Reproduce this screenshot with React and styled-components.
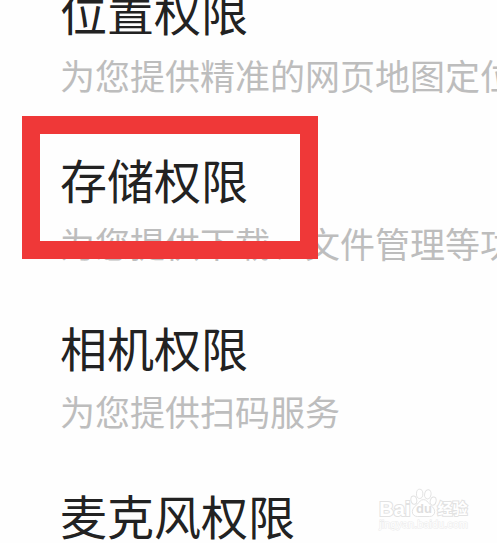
import React from "react";
import styled, { createGlobalStyle } from "styled-components";

const permissions = [
  { id: "location", title: "位置权限", text: "为您提供精准的网页地图定位服务" },
  {
    id: "storage",
    title: "存储权限",
    text: "为您提供下载、文件管理等功能",
    marked: true,
  },
  { id: "camera", title: "相机权限", text: "为您提供扫码服务" },
  { id: "microphone", title: "麦克风权限" },
];

export default function App() {
  return (
    <Page>
      <GlobalStyle />
      <List>
        {permissions.map((item) => (
          <Row key={item.id}>
            <Title>{item.title}</Title>
            {item.text && <Description>{item.text}</Description>}
            {item.marked && <Marker />}
          </Row>
        ))}
      </List>
      <Watermark>
        <Brand>
          <BrandText>Bai</BrandText>
          <Paw />
          <BrandText $small>经验</BrandText>
        </Brand>
        <Site>jingyan.baidu.com</Site>
      </Watermark>
    </Page>
  );
}

function Paw() {
  return (
    <PawBox>
      <svg width="27" height="30" viewBox="0 0 28 30" aria-hidden="true">
        <g fill="#fff" stroke="#e2e2e2" strokeWidth="1">
          <ellipse cx="4" cy="12" rx="3" ry="4.3" transform="rotate(-12 4 12)" />
          <ellipse cx="10" cy="5.5" rx="3.3" ry="4.8" />
          <ellipse cx="18.5" cy="6" rx="3.3" ry="4.8" transform="rotate(10 18.5 6)" />
          <ellipse cx="24" cy="13" rx="3" ry="4.3" transform="rotate(14 24 13)" />
          <path d="M14 11.500c-3 0-4.200 2.300-6 4.400-2 2.200-5.600 4-5.600 8 0 3.300 2.400 5.100 5.200 5.100h12.800c2.800 0 5.200-1.800 5.200-5.100 0-4-3.600-5.800-5.600-8-1.800-2.100-3-4.400-6-4.400z" />
        </g>
      </svg>
      <PawText>du</PawText>
    </PawBox>
  );
}

const GlobalStyle = createGlobalStyle`
  body {
    margin: 0;
    background: #fefefe;
    font-family: "Noto Sans CJK SC", sans-serif;
  }
`;

const Page = styled.main`
  position: relative;
  height: 100vh;
  overflow: hidden;
`;

/* the list is scrolled a little, so the first title is cut at the top */
const List = styled.ul`
  display: flex;
  flex-direction: column;
  gap: 40px;
  margin: -25px 0 0;
  padding: 0 0 0 60px;
  list-style: none;
`;

const Row = styled.li`
  position: relative;
  white-space: nowrap;
`;

const Title = styled.h2`
  margin: 0;
  color: #222;
  font-size: 47px;
  font-weight: 400;
  line-height: 72px;
`;

const Description = styled.p`
  margin: 0;
  color: #bdbdbd;
  font-size: 35px;
  font-weight: 400;
  line-height: 56px;
`;

const Marker = styled.div`
  position: absolute;
  top: -27px;
  left: -38px;
  box-sizing: border-box;
  width: 296px;
  height: 143px;
  border: 18px solid #ef3838;
`;

const Watermark = styled.div`
  position: absolute;
  right: 29px;
  bottom: 12px;
  display: flex;
  flex-direction: column;
  font-family: "Liberation Sans", "Noto Sans CJK SC", sans-serif;
`;

const Brand = styled.div`
  display: flex;
  align-items: flex-end;
`;

const BrandText = styled.span`
  color: #fff;
  font-size: ${(props) => (props.$small ? "15px" : "20px")};
  font-weight: 700;
  line-height: 18px;
  paint-order: stroke fill;
  -webkit-text-stroke: 2px #e2e2e2;
`;

const PawBox = styled.span`
  position: relative;
  display: flex;
`;

const PawText = styled.span`
  position: absolute;
  right: 0;
  bottom: 2px;
  left: 0;
  color: #dedede;
  font-size: 13px;
  font-weight: 700;
  line-height: 14px;
  text-align: center;
`;

const Site = styled.span`
  color: #fff;
  font-size: 11px;
  line-height: 13px;
  paint-order: stroke fill;
  -webkit-text-stroke: 1px #ebebeb;
`;
